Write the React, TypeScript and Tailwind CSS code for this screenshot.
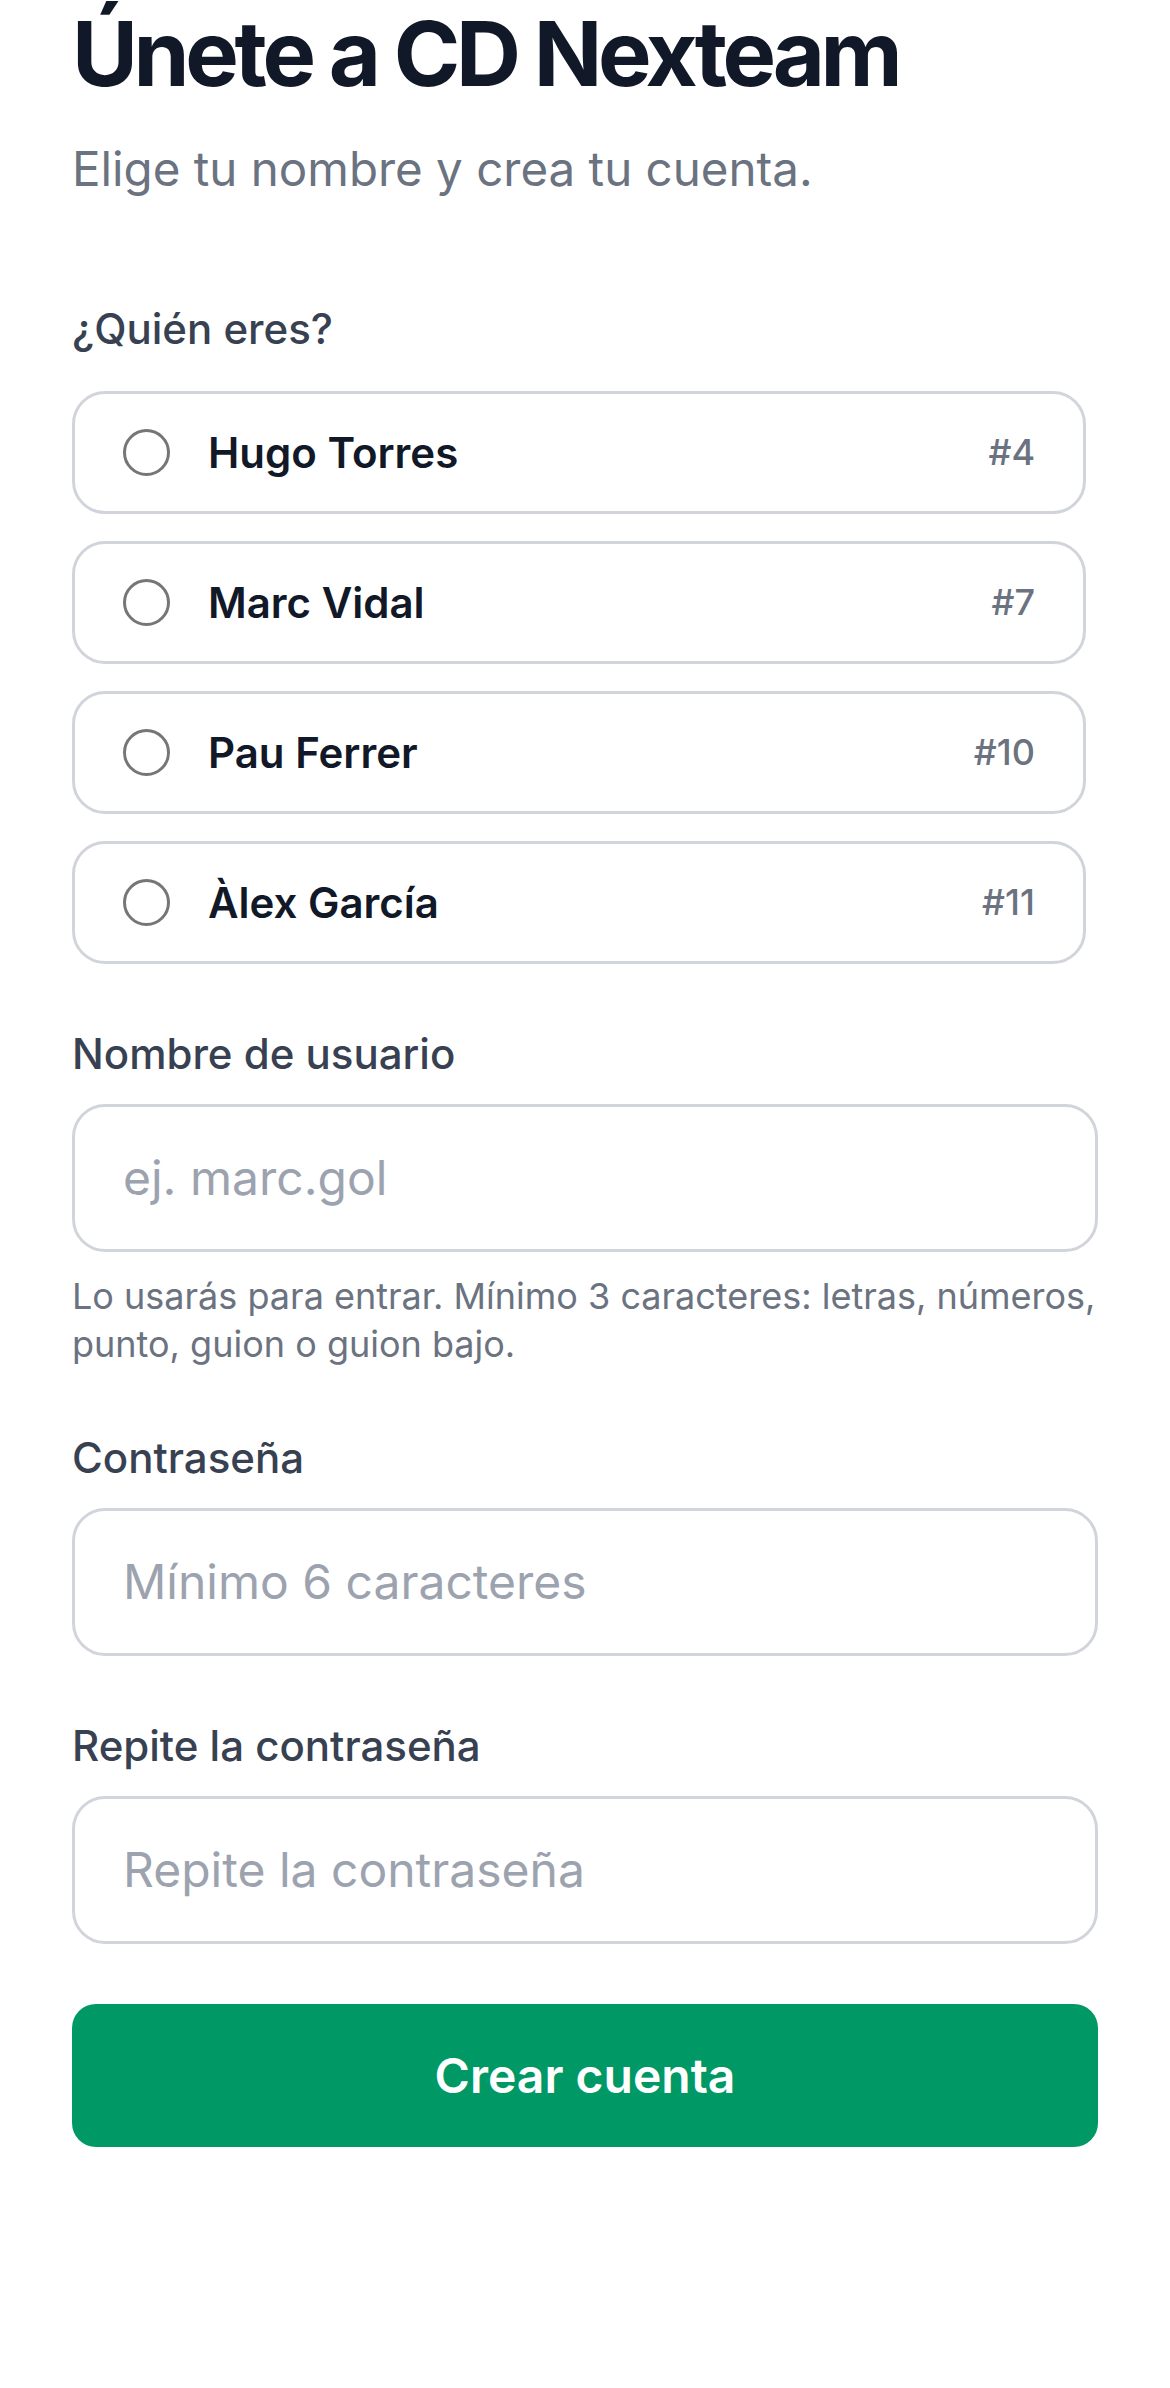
import { useState } from 'react';

interface Player {
  name: string;
  number: number;
}

const players: Player[] = [
  { name: 'Hugo Torres', number: 4 },
  { name: 'Marc Vidal', number: 7 },
  { name: 'Pau Ferrer', number: 10 },
  { name: 'Àlex García', number: 11 },
];

const PlayerOption = ({
  player,
  selected,
  onSelect,
}: {
  player: Player;
  selected: boolean;
  onSelect: () => void;
}) => (
  <label
    onClick={onSelect}
    className="flex items-center gap-[38px] rounded-[33px] border-[3px] border-[#d1d5db] bg-white px-[48px] py-[27px] cursor-pointer"
  >
    <span
      className={
        selected
          ? 'h-[47px] w-[47px] shrink-0 rounded-full border-[14px] border-[#009966]'
          : 'h-[47px] w-[47px] shrink-0 rounded-full border-[3px] border-[#767676]'
      }
    />
    <span className="flex-1 text-[42px] leading-[63px] font-semibold text-[#111827]">{player.name}</span>
    <span className="text-[36px] leading-[63px] font-medium text-[#6b7280]">#{player.number}</span>
  </label>
);

const Field = ({
  label,
  placeholder,
  type = 'text',
  hint,
}: {
  label: string;
  placeholder: string;
  type?: string;
  hint?: string;
}) => (
  <div className="flex flex-col">
    <label className="mb-[20px] text-[42px] leading-[60px] font-medium text-[#374151]">{label}</label>
    <input
      type={type}
      placeholder={placeholder}
      className="w-full rounded-[33px] border-[3px] border-[#d1d5db] bg-white px-[48px] py-[35px] text-[48px] leading-[72px] text-[#111827] placeholder:text-[#9ca3af] outline-none"
    />
    {hint && <p className="mt-[20px] text-[36px] leading-[48px] text-[#6b7280]">{hint}</p>}
  </div>
);

export default function App() {
  const [selected, setSelected] = useState<number | null>(null);

  return (
    <div className="min-h-screen bg-white px-[72px] font-['Inter',sans-serif]">
      {/* Header */}
      <h1 className="text-[90px] leading-[108px] font-bold tracking-[-4.3px] text-[#111827]">Únete a CD Nexteam</h1>
      <p className="mt-[25px] text-[47.5px] leading-[72px] text-[#6b7280]">Elige tu nombre y crea tu cuenta.</p>

      <form className="mt-[94px] flex flex-col gap-[60px]" onSubmit={(e) => e.preventDefault()}>
        {/* Player picker */}
        <div>
          <p className="mb-[32px] text-[42px] leading-[60px] font-medium text-[#374151]">¿Quién eres?</p>
          <div className="flex flex-col gap-[27px] pr-[12px]">
            {players.map((p) => (
              <PlayerOption
                key={p.number}
                player={p}
                selected={selected === p.number}
                onSelect={() => setSelected(p.number)}
              />
            ))}
          </div>
        </div>

        <Field
          label="Nombre de usuario"
          placeholder="ej. marc.gol"
          hint="Lo usarás para entrar. Mínimo 3 caracteres: letras, números, punto, guion o guion bajo."
        />
        <Field label="Contraseña" placeholder="Mínimo 6 caracteres" type="password" />
        <Field label="Repite la contraseña" placeholder="Repite la contraseña" type="password" />

        <button
          type="submit"
          className="rounded-[24px] bg-[#009966] py-[36px] text-[48px] leading-[71px] font-semibold text-white"
        >
          Crear cuenta
        </button>
      </form>
    </div>
  );
}
